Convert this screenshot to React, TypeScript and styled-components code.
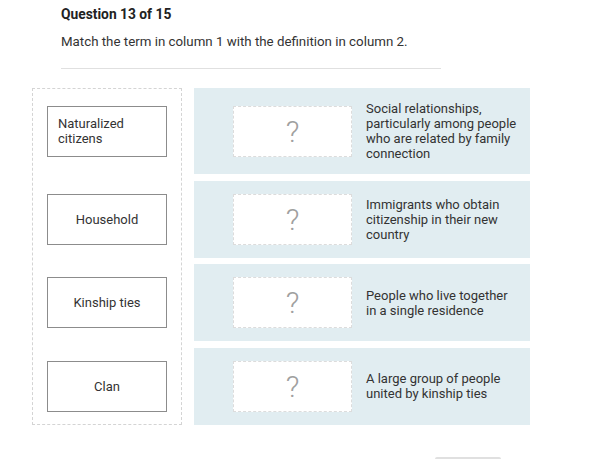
import styled, { createGlobalStyle } from 'styled-components';

const GlobalStyle = createGlobalStyle`
  html, body {
    margin: 0;
    padding: 0;
    background: #fff;
  }
  body {
    font-family: Roboto, "Liberation Sans", Arial, sans-serif;
    color: #333;
  }
`;

const Page = styled.div`
  width: 594px;
  height: 459px;
  overflow: hidden;
  padding-top: 5px;
  box-sizing: border-box;
`;

const Header = styled.header`
  margin-left: 61px;
  width: 380px;
  padding-bottom: 18px;
  border-bottom: 1px solid #e0e0e0;
`;

const Title = styled.h1`
  margin: 0;
  font-size: 13.8px;
  font-weight: 700;
  line-height: 18px;
  color: #222;
`;

const Prompt = styled.p`
  margin: 11px 0 0;
  font-size: 13.3px;
  line-height: 16px;
  color: #333;
`;

const Board = styled.div`
  display: grid;
  grid-template-columns: 150px 336px;
  grid-auto-rows: auto;
  column-gap: 12px;
  row-gap: 6.5px;
  margin: 19px 0 0 32px;
`;

const TermColumn = styled.div`
  grid-column: 1;
  grid-row: 1 / span 4;
  border: 1px dashed #d4d4d4;
`;

const TermSlot = styled.div<{ $row: number }>`
  grid-column: 1;
  grid-row: ${(p) => p.$row};
  display: flex;
  align-items: center;
  padding-left: 15px;
`;

const Term = styled.div`
  width: 120px;
  height: 51px;
  box-sizing: border-box;
  border: 1px solid #8c8c8c;
  background: #fff;
  display: flex;
  align-items: center;
  justify-content: center;
  padding: 0 10px;
  font-size: 13px;
  line-height: 15px;
  color: #333;
`;

const DefRow = styled.div<{ $row: number }>`
  grid-column: 2;
  grid-row: ${(p) => p.$row};
  background: #e1edf1;
  display: flex;
  align-items: center;
  padding: 13px 0 13px 39px;
  gap: 14px;
`;

const Drop = styled.div`
  flex: none;
  width: 119px;
  height: 51px;
  box-sizing: border-box;
  background: #fff;
  border: 1px dashed #dcdcdc;
  display: flex;
  align-items: center;
  justify-content: center;
  font-size: 30px;
  font-weight: 300;
  color: #a0a0a0;
`;

const Definition = styled.div`
  width: 153px;
  font-size: 13px;
  line-height: 15px;
  color: #333;
`;

const Footer = styled.div`
  display: flex;
  margin: 32px 0 0 435px;
`;

const NextButton = styled.button`
  width: 66px;
  height: 30px;
  border: none;
  border-radius: 2px;
  background: #e0e0e0;
  font-family: inherit;
`;

const terms = ['Naturalized citizens', 'Household', 'Kinship ties', 'Clan'];

const definitions = [
  'Social relationships, particularly among people who are related by family connection',
  'Immigrants who obtain citizenship in their new country',
  'People who live together in a single residence',
  'A large group of people united by kinship ties',
];

export default function App() {
  return (
    <Page>
      <GlobalStyle />
      <Header>
        <Title>Question 13 of 15</Title>
        <Prompt>Match the term in column 1 with the definition in column 2.</Prompt>
      </Header>
      <Board>
        <TermColumn />
        {terms.map((t, i) => (
          <TermSlot key={t} $row={i + 1}>
            <Term>{t}</Term>
          </TermSlot>
        ))}
        {definitions.map((d, i) => (
          <DefRow key={d} $row={i + 1}>
            <Drop>?</Drop>
            <Definition>{d}</Definition>
          </DefRow>
        ))}
      </Board>
      <Footer>
        <NextButton aria-label="Next" />
      </Footer>
    </Page>
  );
}
